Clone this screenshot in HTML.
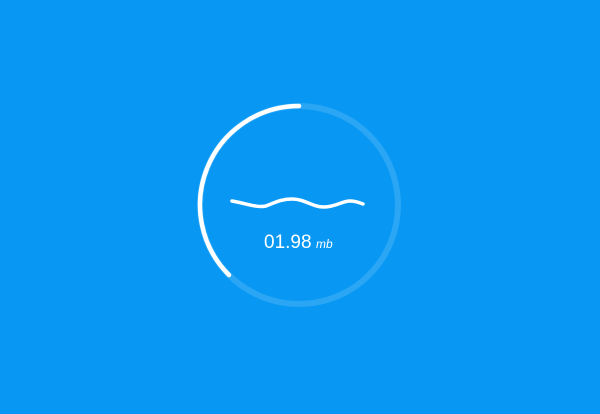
<!DOCTYPE html>
<html><head><style>
html,body{margin:0;padding:0;width:600px;height:414px;background:#0898f4;overflow:hidden}
</style></head><body>
<svg width="600" height="414" viewBox="0 0 600 414" style="position:absolute;left:0;top:0">
<circle cx="299" cy="205" r="99" fill="none" stroke="rgba(255,255,255,0.14)" stroke-width="6"/>
<path d="M299 106 A99 99 0 0 0 229 275" fill="none" stroke="#fff" stroke-width="4.5" stroke-linecap="round"/>
<path d="M232 201 C248 204,258 208,266 206 C276 202,282 199,292 199 C305 199,312 207,324 207 C336 207,342 201,350 201 C356 201,360 203,363 204" fill="none" stroke="#fff" stroke-width="3.5" stroke-linecap="round"/>
<text x="264" y="248" font-family="Liberation Sans, sans-serif" font-size="19" fill="#fff">01.98</text>
<text x="316" y="248" font-family="Liberation Sans, sans-serif" font-size="12" font-style="italic" fill="#fff">mb</text>
</svg>
</body></html>
